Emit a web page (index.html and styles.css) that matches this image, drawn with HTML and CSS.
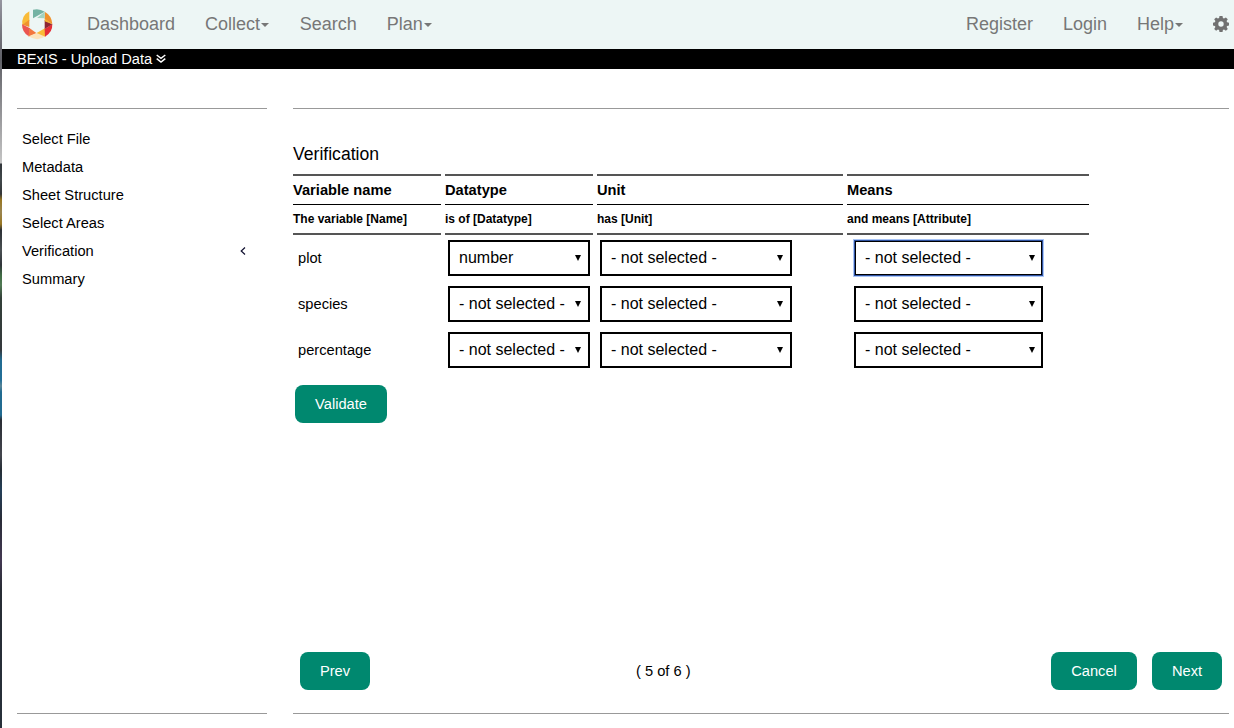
FILE: index.html
```html
<!DOCTYPE html>
<html lang="en">
<head>
<meta charset="utf-8">
<title>BExIS - Upload Data</title>
<link rel="stylesheet" href="styles.css">
</head>
<body>
<div class="edge"></div>
<div class="page">
  <nav class="navbar">
    <svg class="logo" width="32" height="32" viewBox="63 23 96 96">
      <path fill="#f9bb38" d="M88 33V62L67 74Q64 46 88 33Z"/>
      <path fill="#f0922c" d="M67 73L88 58V80Z"/>
      <path fill="#eb5550" d="M66 72L90 84L86 108Q66 96 66 72Z"/>
      <path fill="#f3773f" d="M88 83L110 99L86 109Z"/>
      <path fill="#fce3bc" d="M86 108L111 97L137 108Q111 125 86 108Z"/>
      <path fill="#f9bb38" d="M110 98L136 83V109Z"/>
      <path fill="#e42d37" d="M157 71Q158 96 135 109L134 86Z"/>
      <path fill="#8d2534" d="M134 59L157 72L134 86Z"/>
      <path fill="#f7b733" d="M134 54L157 72L134 63Z"/>
      <path fill="#f0922c" d="M134 34Q156 46 157 72L134 55Z"/>
      <path fill="#74b3a4" d="M99 28Q118 23 134 34L99 54Z"/>
      <path fill="#a3d2bf" d="M134 34V54L111 53Z"/>
    </svg>
    <div class="links">
      <a>Dashboard</a>
      <a>Collect<i class="caret"></i></a>
      <a>Search</a>
      <a>Plan<i class="caret"></i></a>
    </div>
    <div class="links right">
      <a>Register</a>
      <a>Login</a>
      <a>Help<i class="caret"></i></a>
      <svg class="gear" width="16" height="16" viewBox="0 0 16 16"><path fill="#717171" fill-rule="evenodd" d="M6.500 0h3l.4 2.100 1.100.5 1.900-1.200 1.900 1.900-1.200 1.800.5 1.200 2.100.4v2.800l-2.100.4-.5 1.200 1.200 1.800-1.900 1.900-1.900-1.200-1.100.5-.4 2.100h-3l-.4-2.100-1.200-.5-1.800 1.200-1.900-1.900 1.200-1.800-.5-1.200-2-.4V6.700l2-.4.5-1.200-1.200-1.800 1.900-1.900 1.800 1.200 1.200-.5zM8 5.300a2.700 2.700 0 1 0 0 5.400 2.700 2.700 0 0 0 0-5.400z"/></svg>
    </div>
  </nav>
  <header class="titlebar">
    <span>BExIS - Upload Data</span>
    <svg width="10" height="10" viewBox="0 0 10 10" fill="none" stroke="#fff" stroke-width="1.500"><path d="M.7 1L5 4.300 9.300 1M.7 4.700L5 8 9.300 4.700"/></svg>
  </header>
  <div class="columns">
    <aside class="sidebar">
      <ul class="steps">
        <li>Select File</li>
        <li>Metadata</li>
        <li>Sheet Structure</li>
        <li>Select Areas</li>
        <li>Verification<svg width="6" height="8" viewBox="0 0 6 8" fill="none" stroke="#111130" stroke-width="1.200"><path d="M5 .5L1.200 4 5 7.500"/></svg></li>
        <li>Summary</li>
      </ul>
    </aside>
    <main class="main">
      <h1>Verification</h1>
      <div class="grid head">
        <b>Variable name</b><b>Datatype</b><b>Unit</b><b>Means</b>
      </div>
      <div class="grid sub">
        <b>The variable [Name]</b><b>is of [Datatype]</b><b>has [Unit]</b><b>and means [Attribute]</b>
      </div>
      <div class="grid row">
        <span class="name">plot</span>
        <div class="select type">number<i class="arrow"></i></div>
        <div class="select unit">- not selected -<i class="arrow"></i></div>
        <div class="select means focus">- not selected -<i class="arrow"></i></div>
      </div>
      <div class="grid row">
        <span class="name">species</span>
        <div class="select type">- not selected -<i class="arrow"></i></div>
        <div class="select unit">- not selected -<i class="arrow"></i></div>
        <div class="select means">- not selected -<i class="arrow"></i></div>
      </div>
      <div class="grid row">
        <span class="name">percentage</span>
        <div class="select type">- not selected -<i class="arrow"></i></div>
        <div class="select unit">- not selected -<i class="arrow"></i></div>
        <div class="select means">- not selected -<i class="arrow"></i></div>
      </div>
      <button class="btn validate">Validate</button>
      <footer class="pager">
        <button class="btn prev">Prev</button>
        <span class="count">( 5 of 6 )</span>
        <div class="actions">
          <button class="btn cancel">Cancel</button>
          <button class="btn next">Next</button>
        </div>
      </footer>
    </main>
  </div>
</div>
</body>
</html>
```
FILE: styles.css
```css
* { box-sizing: border-box; }
body {
  margin: 0;
  height: 728px;
  display: flex;
  overflow: hidden;
  background: #fff;
  color: #000;
  font: 14.67px/20px "Liberation Sans", Arial, sans-serif;
}
.edge {
  width: 2px;
  flex: none;
  background: linear-gradient(#9696a0 0, #77777f 30px, #606167 60px, #88888c 100px, #c5c5c5 163px, #32373b 164px, #41484b 180px, #333638 194px, #997722 200px, #9a8550 212px, #997722 224px, #2c3035 230px, #4a5053 250px, #30353a 265px, #406b44 275px, #517a55 285px, #334039 298px, #34383c 350px, #216b91 360px, #226f98 380px, #5a8598 386px, #216b91 392px, #216b91 415px, #292d35 420px, #43454d 455px, #252d35 470px, #243f58 490px, #292c37 520px, #433852 560px, #272c34 590px, #27303a 728px);
}
.page { flex: 1; display: flex; flex-direction: column; }
.navbar {
  height: 49px;
  flex: none;
  display: flex;
  align-items: center;
  padding: 0 5px 2px 19px;
  background: #edf6f5;
  color: #777;
}
.links { display: flex; align-items: center; gap: 30px; margin-left: 34px; font-size: 18px; }
.links a { display: flex; align-items: center; }
.right { margin-left: auto; }
.caret {
  margin: 2px 0 0 1px;
  border: 4px solid transparent;
  border-top-color: #777;
  border-bottom: 0;
}
.links:not(.right) .caret { margin-right: .6px; }
.titlebar {
  height: 20px;
  flex: none;
  display: flex;
  align-items: center;
  gap: 4px;
  padding-left: 15px;
  background: #000;
  color: #fff;
}
.columns { display: flex; gap: 26px; padding: 39px 5px 0 15px; }
.sidebar, .main { height: 606px; border: solid #999; border-width: 1px 0; }
.sidebar { width: 250px; flex: none; padding: 16px 5px; }
.steps { list-style: none; margin: 0; padding: 0; }
.steps li {
  height: 28px;
  display: flex;
  align-items: center;
  justify-content: space-between;
  padding-right: 16px;
}
.main { flex: 1; display: flex; flex-direction: column; align-items: flex-start; padding-top: 32px; }
h1 { margin: 0; height: 33px; font-size: 17.6px; font-weight: 400; line-height: 26px; }
.grid { display: grid; grid-template-columns: 148px 148px 246px 242px; column-gap: 4px; }
.head b { height: 31px; border-top: 2px solid #555; border-bottom: 1px solid #000; line-height: 28px; }
.sub b { height: 30px; border-bottom: 2px solid #555; font-size: 12px; line-height: 29px; }
.row { height: 46px; align-items: center; }
.name { padding-left: 5px; }
.select {
  height: 36px;
  display: flex;
  align-items: center;
  justify-content: space-between;
  padding: 0 6px 0 9px;
  border: 2px solid #000;
  font-size: 16px;
  white-space: nowrap;
}
.type { width: 142px; margin-left: 3px; }
.unit { width: 192px; margin-left: 3px; }
.means { width: 189px; margin-left: 7px; }
.focus { outline: 1px solid #2f52a0; outline-offset: -1px; box-shadow: 0 0 0 1px #a9c5f7; }
.arrow {
  margin-bottom: 1px;
  border: 3px solid transparent;
  border-top: 6px solid #000;
  border-bottom: 0;
}
.type .arrow, .unit .arrow { margin-right: 1px; }
.btn {
  height: 38px;
  padding: 0;
  border: 0;
  border-radius: 8px;
  background: #00886f;
  color: #fff;
  font: inherit;
}
.validate { width: 92px; margin: 12px 0 0 2px; }
.pager {
  width: 100%;
  display: flex;
  align-items: center;
  margin-top: auto;
  padding: 0 7px 23px;
}
.count { margin: 0 auto 0 266px; }
.prev, .next { width: 70px; }
.cancel { width: 86px; }
.actions { display: flex; gap: 15px; }
```
